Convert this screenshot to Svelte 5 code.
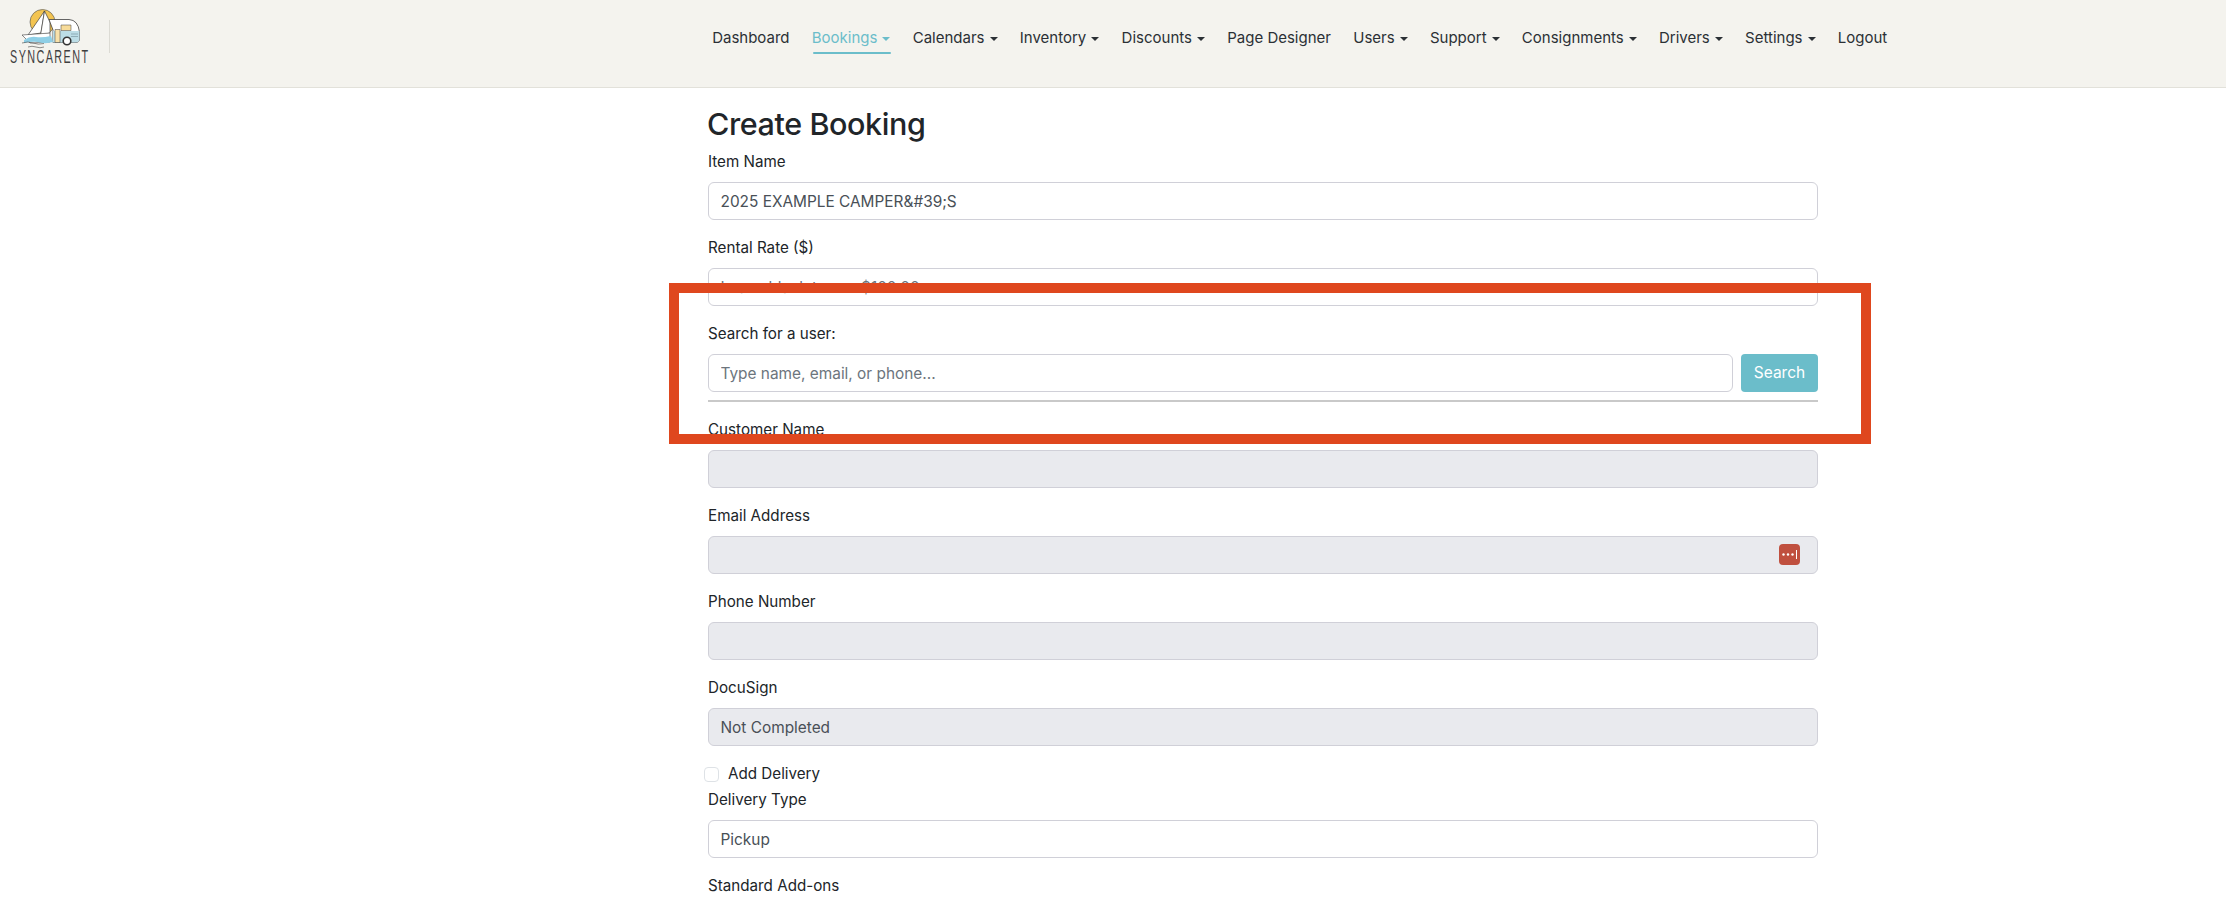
<script>
    const navItems = [
        { name: 'Dashboard' },
        { name: 'Bookings', caret: true, active: true },
        { name: 'Calendars', caret: true },
        { name: 'Inventory', caret: true },
        { name: 'Discounts', caret: true },
        { name: 'Page Designer' },
        { name: 'Users', caret: true },
        { name: 'Support', caret: true },
        { name: 'Consignments', caret: true },
        { name: 'Drivers', caret: true },
        { name: 'Settings', caret: true },
        { name: 'Logout' }
    ];
</script>

<nav class="navbar">
    <a class="brand" href="#top" aria-label="SyncaRent">
        <svg width="100" height="70" viewBox="0 0 100 70">
            <circle cx="42.5" cy="22" r="12.5" fill="#f3c451" stroke="#4a4a4a" stroke-width="0.6" />
            <path d="M44.5 11 L28 35 L41 33 Z" fill="#fff" stroke="#3d3d3d" stroke-width="0.7" />
            <path d="M44.5 11 L40.5 35 L50 33 L50 22 Z" fill="#fff" stroke="#3d3d3d" stroke-width="0.7" />
            <path d="M22 35 L50 33 L50 42 L30 43 Z" fill="#fff" stroke="#3d3d3d" stroke-width="0.6" />
            <path d="M49 19.5 H69 Q78 20 79.5 32 V39 Q79.5 42.5 75 42.5 H53 V30 Z" fill="#fff" stroke="#3d3d3d" stroke-width="0.8" />
            <path d="M53 31 H79.5 V39 Q79.5 42.5 75 42.5 H53 Z" fill="#bcdde6" />
            <path d="M61 25 H71 V30.5 H61 Z" fill="#f7dc9a" stroke="#3d3d3d" stroke-width="0.5" />
            <path d="M55 29.5 H60 V42.5 H55 Z" fill="#f8e1aa" stroke="#3d3d3d" stroke-width="0.5" />
            <path d="M71 34 H78 M71 36.5 H78" stroke="#7d9aa3" stroke-width="0.7" />
            <circle cx="67" cy="41" r="3.8" fill="#fff" stroke="#333" stroke-width="1.6" />
            <path d="M24 40 Q30 36 36 37 T51 36 L53 42 Q46 44 40 42.5 T24 43 Z" fill="#8fcfe6" />
            <path d="M22 43 Q28 41 33 43 T44 43.5 M28 47 Q32 45.5 36 47 T44 47" fill="none" stroke="#444" stroke-width="0.6" />
            <text class="brand-text" transform="translate(10 63) scale(0.6 1)">SYNCARENT</text>
        </svg>
        <span class="brand-rule"></span>
    </a>

    <ul class="nav-list">
        {#each navItems as item}
            <li>
                <a href="#top" class="nav-link" class:active={item.active}>
                    {item.name}{#if item.caret}<span class="caret"></span>{/if}
                </a>
            </li>
        {/each}
    </ul>
</nav>

<main class="page">
    <h1>Create Booking</h1>

    <div class="field">
        <label for="item">Item Name</label>
        <input id="item" class="control" type="text" value="2025 EXAMPLE CAMPER&amp;#39;S" />
    </div>

    <div class="field">
        <label for="rate">Rental Rate ($)</label>
        <input id="rate" class="control" type="text" placeholder="Leave blank to use $100.00" />
    </div>

    <label for="search">Search for a user:</label>
    <div class="search-row">
        <input id="search" class="control" type="text" placeholder="Type name, email, or phone..." />
        <button class="search-btn" type="button">Search</button>
    </div>
    <hr />

    <div class="field">
        <label for="customer">Customer Name</label>
        <input id="customer" class="control" type="text" disabled />
    </div>

    <div class="field">
        <label for="email">Email Address</label>
        <div class="with-icon">
            <input id="email" class="control" type="text" disabled />
            <span class="pw-icon">
                <svg width="21" height="21" viewBox="0 0 21 21">
                    <circle cx="4.5" cy="10.5" r="1.2" fill="#fff" />
                    <circle cx="9" cy="10.5" r="1.2" fill="#fff" />
                    <circle cx="13.5" cy="10.5" r="1.2" fill="#fff" />
                    <rect x="17" y="6" width="1" height="9" fill="#fff" />
                </svg>
            </span>
        </div>
    </div>

    <div class="field">
        <label for="phone">Phone Number</label>
        <input id="phone" class="control" type="text" disabled />
    </div>

    <div class="field">
        <label for="docusign">DocuSign</label>
        <input id="docusign" class="control" type="text" value="Not Completed" disabled />
    </div>

    <div class="check-row">
        <input id="delivery" type="checkbox" />
        <label for="delivery">Add Delivery</label>
    </div>

    <div class="field">
        <label for="type">Delivery Type</label>
        <input id="type" class="control" type="text" value="Pickup" />
    </div>

    <div class="last-label">Standard Add-ons</div>

    <div class="callout"></div>
</main>

<style>
    :global(body) {
        margin: 0;
        background: #fff;
        color: #212529;
        font-family: Inter, "Liberation Sans", sans-serif;
        font-size: 15.2px;
        line-height: 24px;
        overflow: hidden;
    }
    .navbar {
        display: flex;
        align-items: flex-start;
        box-sizing: border-box;
        height: 88px;
        background: #f4f3ee;
        border-bottom: 1px solid #e2e1da;
    }
    .brand {
        display: flex;
        flex: none;
        width: 701px;
        text-decoration: none;
    }
    .brand-text {
        font-family: "Liberation Sans", sans-serif;
        font-size: 18px;
        letter-spacing: 2.4px;
        fill: #3f3f3f;
    }
    .brand-rule {
        width: 1px;
        height: 33px;
        margin: 20px 0 0 9px;
        background: #dcdbd4;
    }
    .nav-list {
        display: flex;
        margin: 26px 0 0;
        padding: 0;
        list-style: none;
        font-size: 15px;
    }
    .nav-link {
        position: relative;
        display: block;
        padding: 0 11.15px;
        color: #2b3035;
        text-decoration: none;
        white-space: nowrap;
    }
    .nav-link.active {
        color: #6bbdca;
    }
    .nav-link.active::after {
        content: '';
        position: absolute;
        left: 12px;
        right: 11px;
        bottom: -4px;
        height: 2px;
        border-radius: 1px;
        background: #6bbdca;
    }
    .caret {
        display: inline-block;
        margin-left: 5px;
        vertical-align: 2px;
        border-top: 4px solid currentColor;
        border-right: 4px solid transparent;
        border-left: 4px solid transparent;
    }
    .page {
        position: relative;
        width: 1110px;
        margin-left: 708px;
        padding-top: 17px;
    }
    h1 {
        margin: 0 0 6.6px -1px;
        font-size: 30.5px;
        font-weight: 500;
        line-height: 38.4px;
        letter-spacing: -0.4px;
    }
    label, .last-label {
        display: block;
        margin-bottom: 8px;
    }
    .field {
        margin-bottom: 16px;
    }
    .control {
        display: block;
        box-sizing: border-box;
        width: 100%;
        height: 38px;
        padding: 6px 11.5px;
        border: 1px solid #d0d0d8;
        border-radius: 6px;
        background: #fff;
        color: #495057;
        font: inherit;
        font-size: 15.4px;
    }
    .control::placeholder {
        color: #6c757d;
    }
    .control:disabled {
        background: #e9eaee;
        opacity: 1;
    }
    .search-row {
        display: flex;
        gap: 8px;
    }
    .search-btn {
        flex: none;
        width: 77px;
        height: 38px;
        padding: 0;
        border: 0;
        border-radius: 4px;
        background: #6bbdca;
        color: #fff;
        font: inherit;
        font-size: 15.5px;
    }
    hr {
        height: 2px;
        margin: 8px 0 16px;
        border: 0;
        background: #c9c9c9;
    }
    .with-icon {
        position: relative;
    }
    .pw-icon {
        position: absolute;
        top: 8px;
        right: 18px;
        width: 21px;
        height: 21px;
        border-radius: 4px;
        background: #c0503f;
    }
    .pw-icon svg {
        display: block;
    }
    .check-row {
        display: flex;
        align-items: center;
        height: 24px;
        margin-bottom: 2px;
    }
    .check-row input {
        appearance: none;
        box-sizing: border-box;
        flex: none;
        width: 15px;
        height: 15px;
        margin: 0 9px 0 -4px;
        border: 1px solid #dee2e6;
        border-radius: 4px;
        background: #fff;
    }
    .check-row label {
        margin: 0;
    }
    .callout {
        position: absolute;
        top: 195px;
        left: -39px;
        box-sizing: border-box;
        width: 1202px;
        height: 161px;
        border: 10px solid #df471e;
    }
</style>
